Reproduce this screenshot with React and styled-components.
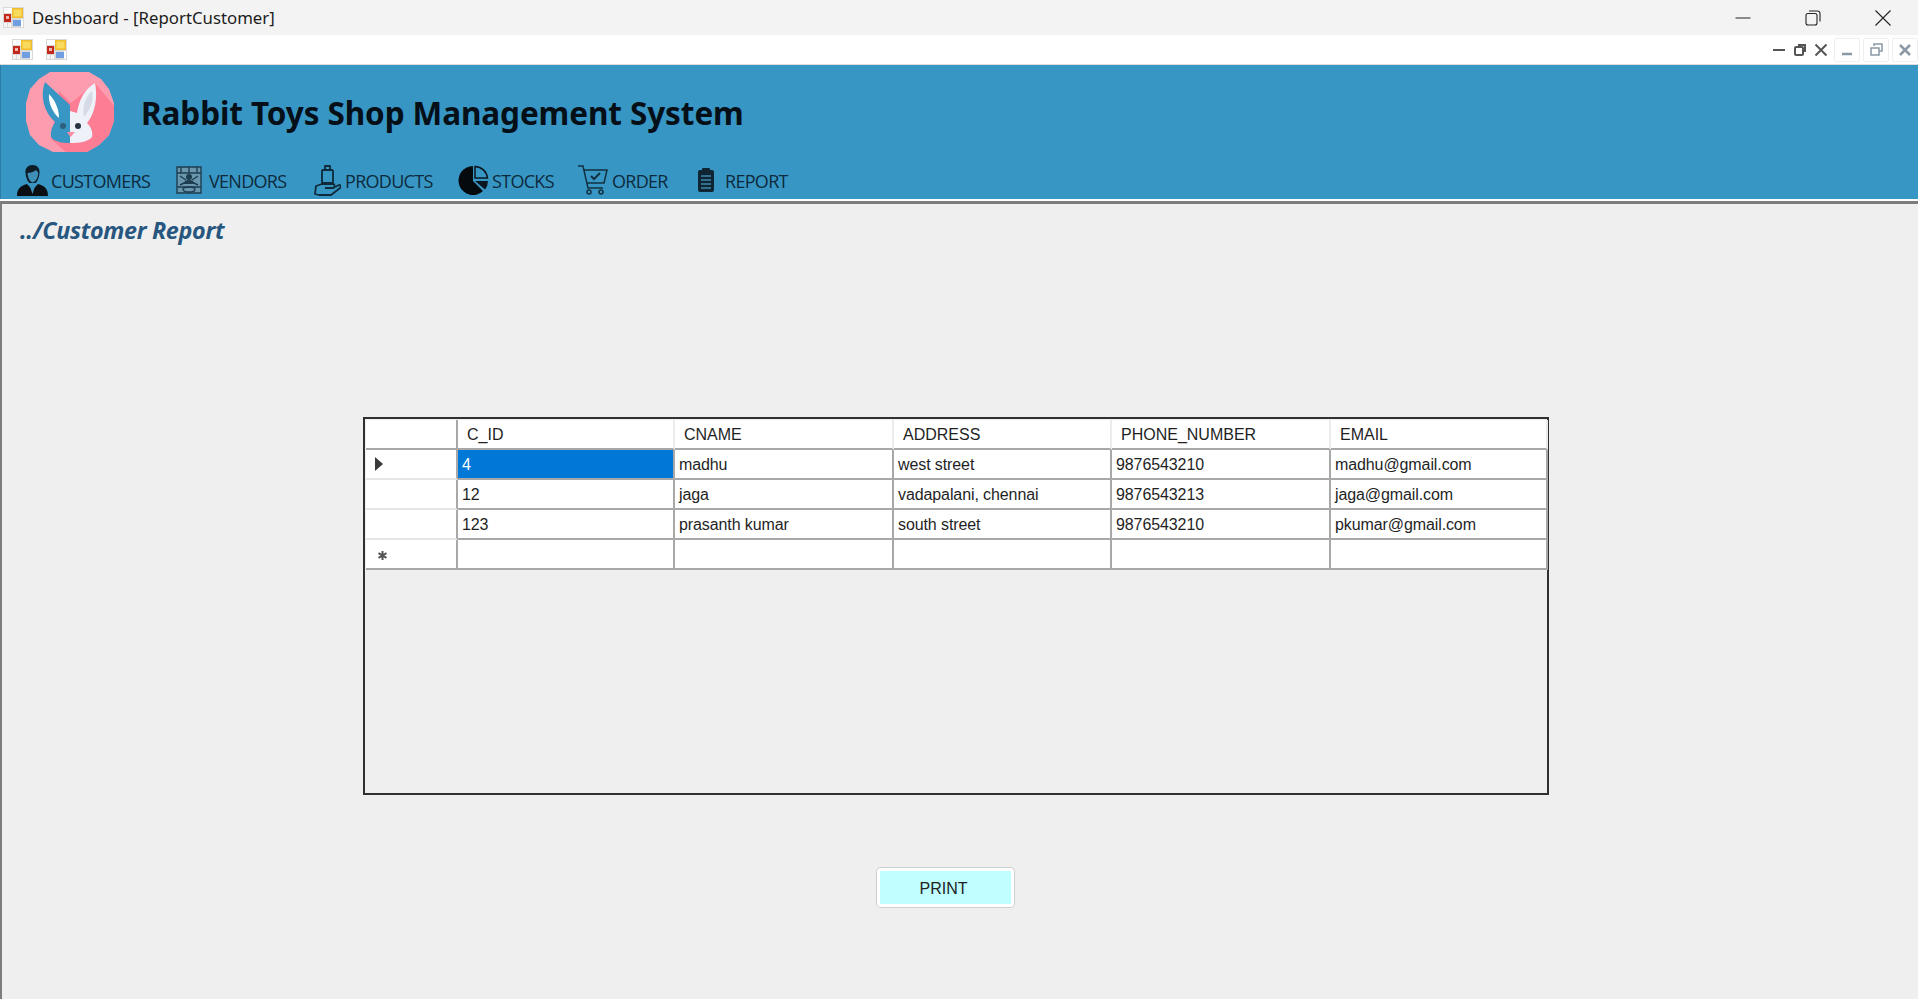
import React from 'react'
import styled, { createGlobalStyle } from 'styled-components'

const GlobalStyle = createGlobalStyle`
  html, body { margin: 0; padding: 0; height: 100%; background: #efefef; overflow: hidden; }
  #root { height: 999px; }
  * { box-sizing: border-box; }
`

const Page = styled.div`
  width: 1918px;
  height: 999px;
  display: flex;
  flex-direction: column;
  font-family: "Liberation Sans", Arial, sans-serif;
  overflow: hidden;
`

const TitleBar = styled.div`
  height: 35px;
  flex: none;
  background: #f3f3f3;
  display: flex;
  align-items: center;
  padding-left: 3px;
`

const TitleText = styled.span`
  margin-left: 8px;
  font-family: "Noto Sans", "Open Sans", sans-serif;
  font-size: 16.8px;
  color: #1c1c1c;
`

const WindowButtons = styled.div`
  margin-left: auto;
  display: flex;
  align-items: center;
  height: 100%;
`

const WindowButton = styled.div`
  width: 70px;
  height: 100%;
  display: flex;
  align-items: center;
  justify-content: center;
`

const MenuStrip = styled.div`
  height: 30px;
  flex: none;
  background: #fff;
  border-bottom: 1px solid #dcdcdc;
  display: flex;
  align-items: center;
  padding-left: 12px;
  gap: 13px;
`

const ChildControls = styled.div`
  margin-left: auto;
  display: flex;
  align-items: center;
  gap: 3px;
`

const ChildGlyphs = styled.div`
  display: flex;
  align-items: center;
  gap: 7px;
  margin-right: 3px;
`

const ChildButton = styled.div`
  width: 26px;
  height: 24px;
  border: 1px solid #f0f0f0;
  border-radius: 2px;
  display: flex;
  align-items: center;
  justify-content: center;
`

const Header = styled.header`
  height: 134px;
  flex: none;
  background: #3896c4;
  border-left: 1px solid #2c7ea8;
  display: flex;
  flex-direction: column;
`

const Brand = styled.div`
  display: flex;
  align-items: center;
  height: 88px;
  padding: 6px 0 0 24px;
`

const AppName = styled.h1`
  margin: 1px 0 0 26px;
  font-family: "Noto Sans", "Open Sans", sans-serif;
  font-weight: 700;
  font-size: 31.5px;
  letter-spacing: -0.1px;
  color: #050f17;
`

const Nav = styled.nav`
  display: flex;
  align-items: center;
  height: 38px;
  margin-top: 8px;
`

const NavItem = styled.div`
  display: flex;
  align-items: center;
  width: ${p => p.$w}px;
  padding-left: ${p => p.$pad}px;
  gap: ${p => p.$gap}px;
  font-family: "Open Sans", "Noto Sans", sans-serif;
  font-size: 18px;
  letter-spacing: -0.7px;
  color: #0d2a3c;
`

const NavLabel = styled.span`
  padding-top: 2px;
`

const Content = styled.main`
  flex: 1;
  background: #efefef;
  border-top: 2px solid #fff;
  display: flex;
  flex-direction: column;
  box-shadow: inset 2px 3px 0 #7d7d7d;
  padding: 14px 0 0 20px;
`

const Crumb = styled.div`
  font-family: "Open Sans", "Noto Sans", sans-serif;
  font-style: italic;
  font-weight: 700;
  font-size: 23.3px;
  letter-spacing: -0.3px;
  line-height: 30px;
  color: #27567f;
`

const GridFrame = styled.div`
  margin: 172px 0 0 343px;
  width: 1186px;
  height: 378px;
  border: 2px solid #303030;
  padding: 1px 0 0 1px;
  background: #efefef;
`

const Table = styled.div`
  display: grid;
  grid-template-columns: 92px 217px 219px 218px 219px 217px;
  grid-auto-rows: 30px;
  width: 1182px;
`

const Cell = styled.div`
  background: ${p => (p.$selected ? '#0078d7' : '#fff')};
  color: ${p => (p.$selected ? '#fff' : '#1f1f1f')};
  border-right: 2px solid ${p => (p.$head && !p.$corner ? '#ececec' : '#a8a8a8')};
  border-bottom: 2px solid #a8a8a8;
  font-size: 16px;
  letter-spacing: ${p => (p.$head ? '0' : '-0.1px')};
  display: flex;
  align-items: center;
  padding: 2px 0 0 ${p => (p.$head ? 9 : 4)}px;
  white-space: nowrap;
  overflow: hidden;
`

const RowHeader = styled.div`
  background: #fff;
  border-right: 2px solid #a8a8a8;
  border-bottom: 2px solid ${p => (p.$last ? '#a8a8a8' : '#e6e6e6')};
  display: flex;
  align-items: center;
  padding-left: ${p => (p.$star ? 12 : 9)}px;
`

const Arrow = styled.span`
  width: 0;
  height: 0;
  border-top: 7px solid transparent;
  border-bottom: 7px solid transparent;
  border-left: 8px solid #3a3a3a;
`

const Star = styled.svg`
  width: 9px;
  height: 9px;
  margin-top: 3px;
`

const PrintButton = styled.button`
  align-self: flex-start;
  margin: 73px 0 0 857px;
  width: 137px;
  height: 39px;
  background: #bfffff;
  border: 3px solid #fff;
  border-radius: 4px;
  box-shadow: 0 0 0 1px #cfcfcf;
  font-family: "Liberation Sans", Arial, sans-serif;
  font-size: 16px;
  color: #222;
  padding: 2px 4px 0 0;
`

const FormIcon = () => (
  <svg width="21" height="21" viewBox="0 0 21 21">
    <rect width="21" height="21" fill="#d9d9d9" />
    <rect x="1" y="1" width="8" height="5" fill="#fff" />
    <rect x="9" y="1" width="11" height="10" fill="#f0bd2c" />
    <rect x="10.500" y="2.500" width="8" height="7" fill="#f8da5c" />
    <rect x="1" y="7" width="7" height="8" fill="#c4281c" />
    <rect x="3" y="9" width="3" height="3" fill="#f0b8ae" />
    <rect x="10" y="13" width="8" height="6" fill="#6f9fe0" />
    <rect x="1" y="16" width="3" height="4" fill="#f5f5f5" />
    <rect x="5" y="16" width="3" height="4" fill="#f5f5f5" />
    <rect x="18" y="12" width="2" height="8" fill="#fff" />
  </svg>
)

const MinIcon = () => (
  <svg width="16" height="16" viewBox="0 0 16 16"><path d="M0.5 8h15" stroke="#222" /></svg>
)
const RestoreIcon = () => (
  <svg width="16" height="16" viewBox="0 0 16 16" fill="none" stroke="#222" strokeWidth="1.1">
    <rect x="1" y="3.500" width="11" height="11.500" rx="2" />
    <path d="M4 1h8.500a2.500 2.500 0 0 1 2.500 2.500v8" />
  </svg>
)
const CloseIcon = () => (
  <svg width="16" height="16" viewBox="0 0 16 16"><path d="M0.5 0.5l15 15M15.500 0.5l-15 15" stroke="#222" strokeWidth="1.1" /></svg>
)

const RabbitLogo = () => (
  <svg width="90" height="82" viewBox="0 0 90 82">
    <defs>
      <clipPath id="disc"><path d="M25 1H64L76 8L84 18L89 32V50L84 64L74 74L62 81H28L14 74L5 64L1 50V32L5 18L14 8Z" /></clipPath>
    </defs>
    <g clipPath="url(#disc)">
      <rect width="90" height="82" fill="#fd9cae" />
      <path d="M34 20L46 32L70 12L90 36V82H42L26 68Z" fill="#fd7d94" />
      <path d="M45 34L20 11C15 24 18 40 30 51C27 56 25 61 26 66C29 71 38 72 45 72Z" fill="#3896c4" />
      <path d="M45 72V40L52 42C54 28 60 18 70 12C73 26 70 43 62 52C67 57 68 62 67 66C63 71 54 72 45 72Z" fill="#eef1f8" />
      <path d="M24 23C30 29 34 38 34 47C28 42 23 32 24 23Z" fill="#fff" />
      <path d="M67 20C69 28 66 38 59 46C57 36 60 26 67 20Z" fill="#d5dae6" />
      <circle cx="38" cy="55" r="3" fill="#2f5f7e" />
      <circle cx="53" cy="55" r="3" fill="#28323e" />
      <path d="M42 61H50L45.500 66Z" fill="#fd8aa0" />
    </g>
  </svg>
)

const PersonIcon = () => (
  <svg width="31" height="32" viewBox="0 0 31 32">
    <path d="M15.500 1c4.500 0 7.500 3 7 8-.4 4-1.600 8-4 10h-6c-2.400-2-3.600-6-4-10-.5-5 2.500-8 7-8Z" fill="#0d1c26" />
    <path d="M10.500 9c3 0 6-1 8.500-3 1 1.500 2.300 2 2.300 3-.3 4-2 9-5.800 9.500C12.500 18 10.800 13 10.500 9Z" fill="#3f8eb5" />
    <path d="M0 32c0-7 3-10 10-12l5.500 6 5.500-6c7 2 10 5 10 12Z" fill="#0a0f14" />
    <path d="M12.500 21l3 3.500 3-3.500-3 9Z" fill="#3f8eb5" />
  </svg>
)
const VendorIcon = () => (
  <svg width="26" height="28" viewBox="0 0 26 28">
    <rect x="1" y="1" width="24" height="26" fill="#6a97ae" />
    <g fill="none" stroke="#1d3d50" strokeWidth="1.400">
      <path d="M1 1h24v26H1zM1 7h24M1 21h24M5 1v6M13 1v6M21 1v6" />
      <path d="M4 10l6 4M22 10l-6 4M4 19l6-3M22 19l-6-3" />
      <ellipse cx="13" cy="23.500" rx="6" ry="2.500" />
    </g>
    <circle cx="13" cy="11" r="3" fill="#1d3d50" />
    <path d="M8 18c0-3 2-4 5-4s5 1 5 4Z" fill="#1d3d50" />
  </svg>
)
const ProductIcon = () => (
  <svg width="28" height="32" viewBox="0 0 28 32" fill="none" stroke="#0f2a3b" strokeWidth="1.800" strokeLinejoin="round">
    <rect x="9" y="6" width="11" height="13" rx="1" />
    <path d="M12 6V2h5v4" />
    <path d="M8 20h12c2 0 2 4 0 4h-8" />
    <path d="M22 23l4-2c2 0 2 2 1 3l-9 7H6l-4 -1 1 -8 6-2" />
  </svg>
)
const StockIcon = () => (
  <svg width="31" height="31" viewBox="0 0 31 31">
    <path d="M15 1A14.500 14.500 0 1 0 25 26L15 16Z" fill="#050a0e" />
    <path d="M17 1.500A13 13 0 0 1 29.500 13H17Z" fill="none" stroke="#0a1620" strokeWidth="1.500" />
    <path d="M17 16H30A14 14 0 0 1 27 24.500Z" fill="#0a1620" />
  </svg>
)
const CartIcon = () => (
  <svg width="30" height="32" viewBox="0 0 30 32" fill="none" stroke="#12303f" strokeWidth="1.500">
    <path d="M0 2h5l5 22h15" />
    <path d="M6 6h23l-3 13H9" />
    <path d="M13 12l3 3 6-6" strokeWidth="2" />
    <circle cx="11" cy="28" r="2" />
    <circle cx="23" cy="28" r="2" />
  </svg>
)
const ReportIcon = () => (
  <svg width="20" height="26" viewBox="0 0 20 26">
    <rect x="2" y="3" width="16" height="22" rx="2" fill="#0f2533" />
    <rect x="6" y="1" width="8" height="4" rx="1" fill="#0f2533" />
    <path d="M5 9h10M5 13h10M5 17h10M5 21h10" stroke="#3f86ad" strokeWidth="1.500" />
  </svg>
)

const navItems = [
  { label: 'CUSTOMERS', icon: <PersonIcon />, w: 175, pad: 16, gap: 3 },
  { label: 'VENDORS', icon: <VendorIcon />, w: 137, pad: 0, gap: 7 },
  { label: 'PRODUCTS', icon: <ProductIcon />, w: 145, pad: 0, gap: 4 },
  { label: 'STOCKS', icon: <StockIcon />, w: 120, pad: 0, gap: 3 },
  { label: 'ORDER', icon: <CartIcon />, w: 118, pad: 0, gap: 4 },
  { label: 'REPORT', icon: <ReportIcon />, pad: 0, gap: 9 },
]

const columns = ['C_ID', 'CNAME', 'ADDRESS', 'PHONE_NUMBER', 'EMAIL']
const rows = [
  ['4', 'madhu', 'west street', '9876543210', 'madhu@gmail.com'],
  ['12', 'jaga', 'vadapalani, chennai', '9876543213', 'jaga@gmail.com'],
  ['123', 'prasanth kumar', 'south street', '9876543210', 'pkumar@gmail.com'],
  ['', '', '', '', ''],
]

export default function App() {
  return (
    <Page>
      <GlobalStyle />
      <TitleBar>
        <FormIcon />
        <TitleText>Deshboard - [ReportCustomer]</TitleText>
        <WindowButtons>
          <WindowButton><MinIcon /></WindowButton>
          <WindowButton><RestoreIcon /></WindowButton>
          <WindowButton><CloseIcon /></WindowButton>
        </WindowButtons>
      </TitleBar>
      <MenuStrip>
        <FormIcon />
        <FormIcon />
        <ChildControls>
          <ChildGlyphs>
            <svg width="14" height="14" viewBox="0 0 14 14"><path d="M1 7h12" stroke="#555" strokeWidth="2" /></svg>
            <svg width="14" height="14" viewBox="0 0 14 14" fill="none" stroke="#555" strokeWidth="2"><rect x="2" y="4" width="8" height="8" rx="1" /><path d="M5 2h7v7" /></svg>
            <svg width="14" height="14" viewBox="0 0 14 14"><path d="M1.500 1.500l11 11M12.500 1.500l-11 11" stroke="#555" strokeWidth="2" /></svg>
          </ChildGlyphs>
          <ChildButton><svg width="12" height="12" viewBox="0 0 12 12"><path d="M1 10h10" stroke="#8b98a6" strokeWidth="2.500" /></svg></ChildButton>
          <ChildButton><svg width="13" height="13" viewBox="0 0 13 13" fill="none" stroke="#8b98a6" strokeWidth="1.500"><rect x="1" y="5" width="8" height="7" /><path d="M4 3V1h8v7h-3" /></svg></ChildButton>
          <ChildButton><svg width="12" height="12" viewBox="0 0 12 12"><path d="M1 1l10 10M11 1L1 11" stroke="#8b98a6" strokeWidth="2.500" /></svg></ChildButton>
        </ChildControls>
      </MenuStrip>
      <Header>
        <Brand>
          <RabbitLogo />
          <AppName>Rabbit Toys Shop Management System</AppName>
        </Brand>
        <Nav>
          {navItems.map(item => (
            <NavItem key={item.label} $w={item.w} $pad={item.pad} $gap={item.gap}>
              {item.icon}
              <NavLabel>{item.label}</NavLabel>
            </NavItem>
          ))}
        </Nav>
      </Header>
      <Content>
        <Crumb>../Customer Report</Crumb>
        <GridFrame>
          <Table>
            <Cell $head $corner />
            {columns.map(c => <Cell $head key={c}>{c}</Cell>)}
            {rows.map((row, r) => (
              <React.Fragment key={r}>
                <RowHeader $last={r === rows.length - 1} $star={r === 3}>
                  {r === 0 && <Arrow />}
                  {r === 3 && (
                    <Star viewBox="0 0 9 9">
                      <path d="M4.500 0v9M0.500 2.200l8 4.600M8.500 2.200l-8 4.600" stroke="#555" strokeWidth="2" />
                    </Star>
                  )}
                </RowHeader>
                {row.map((v, c) => (
                  <Cell key={c} $selected={r === 0 && c === 0}>{v}</Cell>
                ))}
              </React.Fragment>
            ))}
          </Table>
        </GridFrame>
        <PrintButton>PRINT</PrintButton>
      </Content>
    </Page>
  )
}
